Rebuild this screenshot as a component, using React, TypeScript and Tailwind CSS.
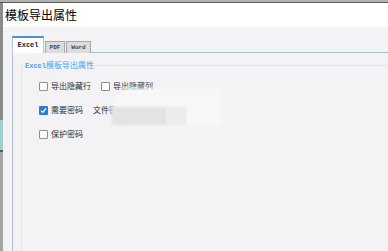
type BoxProps = {
  label: string
  checked?: boolean
}

function Check({ label, checked }: BoxProps) {
  return (
    <div className="flex items-center gap-[3px]">
      {checked ? (
        <div className="w-[9px] h-[9px] rounded-[1px] bg-[#2f7bd6] flex items-center justify-center">
          <svg width="7" height="7" viewBox="0 0 7 7">
            <path d="M1 3.6 L2.8 5.4 L6 1.4" stroke="white" strokeWidth="1.3" fill="none" />
          </svg>
        </div>
      ) : (
        <div className="w-[9px] h-[9px] rounded-[1px] border border-[#8c8c8c] bg-white" />
      )}
      <span className="text-[8px] leading-[10px] text-[#2e2e2e]">{label}</span>
    </div>
  )
}

export default function App() {
  return (
    <div
      className="relative w-[388px] h-[251px] overflow-hidden flex flex-col bg-[#f3f3f5]"
      style={{ fontFamily: '"Noto Sans CJK SC", "Noto Sans", sans-serif' }}
    >
      {/* TOP EDGE */}
      <div className="h-[2px] bg-[#b3b3b3]" />
      <div className="h-[1px] bg-[#5c5c5c]" />

      <div className="flex flex-1">
        {/* LEFT EDGE */}
        <div className="w-[3px] flex flex-col bg-[#8a8a8a]">
          <div className="h-[117px] bg-[#8a8a8a]" />
          <div className="h-[30px] bg-[#9fcfcf]" />
          <div className="h-[2px] bg-[#5a5a5a]" />
          <div className="flex-1 bg-[#a4a4a4]" />
        </div>

        <div className="flex-1 flex flex-col">
          {/* TITLE */}
          <div className="h-[24px] bg-white flex items-center pl-[2px]">
            <span className="text-[12px] text-black leading-none">模板导出属性</span>
          </div>

          {/* BODY */}
          <div className="flex-1 flex flex-col pl-[9px] pt-[9px]">
            {/* TABS */}
            <div className="flex items-end h-[17px]">
              <div className="w-[32px] h-[17px] bg-white border-t-2 border-[#4d8fd6] border-x border-x-[#b8c4d4] flex items-center justify-center">
                <span className="text-[7px] font-bold text-[#222]" style={{ fontFamily: '"Liberation Mono", monospace' }}>Excel</span>
              </div>
              <div className="w-[20px] h-[12px] ml-[1px] bg-[#dcdcde] border border-[#a6a6a8] border-b-0 flex items-center justify-center">
                <span className="text-[6px] font-bold text-[#444]" style={{ fontFamily: '"Liberation Mono", monospace' }}>PDF</span>
              </div>
              <div className="w-[25px] h-[12px] ml-[1px] bg-[#dcdcde] border border-[#a6a6a8] border-b-0 flex items-center justify-center">
                <span className="text-[6px] font-bold text-[#444]" style={{ fontFamily: '"Liberation Mono", monospace' }}>Word</span>
              </div>
              <div className="flex-1 border-b border-[#a9bdd1]" />
            </div>

            {/* PANEL */}
            <div className="flex-1 border-l border-[#b3c2d8] pl-[8px] pt-[7px]">
              <fieldset className="h-full border-l border-t border-[#e3e3e6] pl-[3px]">
                <legend className="text-[8px] leading-[10px] text-[#45a8ec] px-0">
                  <span className="text-[7px] font-bold" style={{ fontFamily: '"Liberation Mono", monospace' }}>Excel</span>
                  模板导出属性
                </legend>

                <div className="flex flex-col gap-[14px] pl-[14px] pt-[10px]">
                  <div className="flex items-center gap-[10px]">
                    <Check label="导出隐藏行" />
                    <Check label="导出隐藏列" />
                  </div>
                  <div className="flex items-center gap-[10px]">
                    <Check label="需要密码" checked />
                    <span className="text-[8px] leading-[10px] text-[#2e2e2e]">文件密码</span>
                  </div>
                  <div className="flex items-center">
                    <Check label="保护密码" />
                  </div>
                </div>
              </fieldset>
            </div>
          </div>
        </div>
      </div>

      {/* BLURRED PATCH */}
      <div className="absolute left-[112px] top-[88px] w-[110px] h-[38px] rounded-l-[18px] bg-[#f7f7f8] blur-[2px]" />
      <div className="absolute left-[112px] top-[107px] w-[55px] h-[18px] bg-[#e3e3e5] blur-[1px]" />
      <div className="absolute left-[167px] top-[107px] w-[20px] h-[18px] bg-[#ececee] blur-[1px]" />
      <div className="absolute left-[187px] top-[107px] w-[34px] h-[18px] bg-[#f8f8f9] blur-[1px]" />
    </div>
  )
}
